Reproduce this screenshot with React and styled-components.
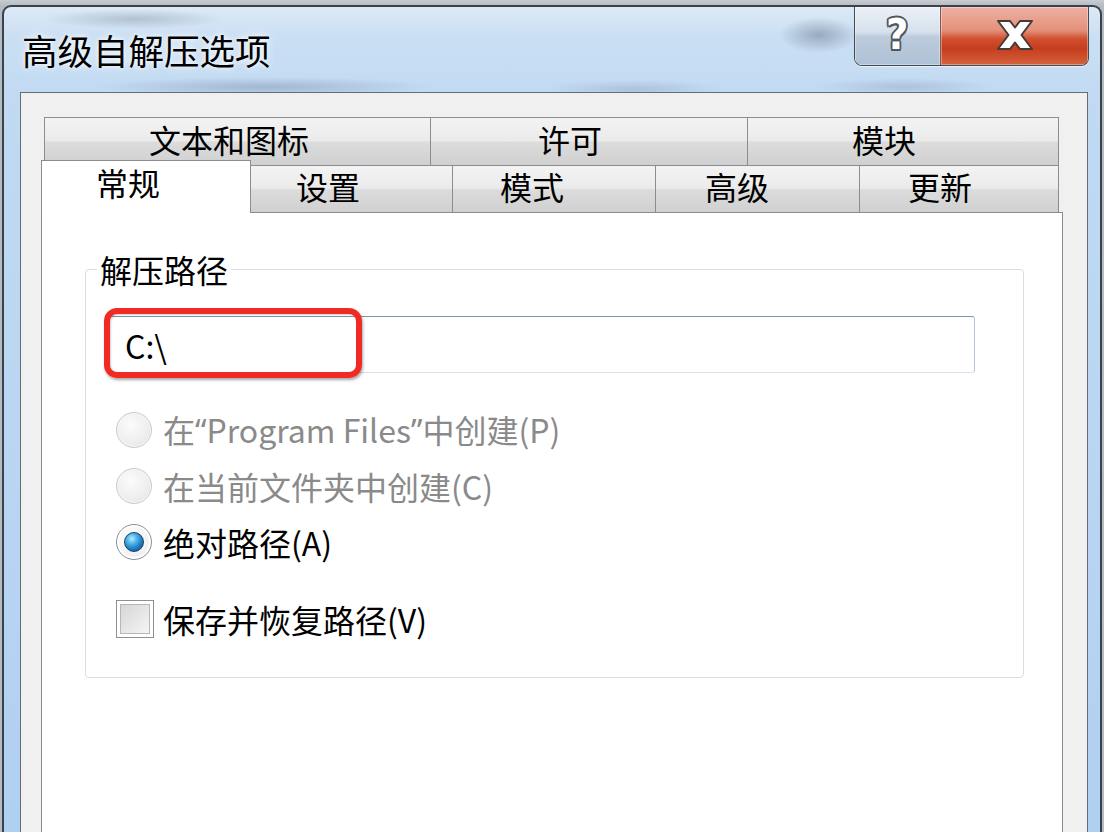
import React from 'react';
import styled, { createGlobalStyle } from 'styled-components';

const GlobalStyle = createGlobalStyle`
  html, body { margin: 0; padding: 0; height: 100%; overflow: hidden; }
  body {
    background: #b5bcc4;
    font-family: "Noto Sans CJK SC", "Noto Sans", sans-serif;
  }
  #root { height: 100%; }
`;

const Page = styled.div`
  box-sizing: border-box;
  height: 832px;
  padding: 5px 2px 0 2px;
  background: linear-gradient(180deg, #c9ccd0 0px, #b4bbc3 6px);
`;

const Window = styled.div`
  box-sizing: border-box;
  width: 1100px;
  height: 827px;
  display: flex;
  flex-direction: column;
  border: 2px solid #3a424b;
  border-bottom: none;
  border-radius: 9px 9px 0 0;
  padding: 0 12px 0 16px;
  overflow: hidden;
  background:
    radial-gradient(ellipse 90px 10px at 130px 12px, rgba(150, 165, 180, 0.55), transparent),
    radial-gradient(ellipse 170px 10px at 260px 80px, rgba(120, 140, 165, 0.45), transparent),
    radial-gradient(ellipse 40px 18px at 815px 28px, rgba(110, 125, 145, 0.55), transparent),
    radial-gradient(ellipse 90px 9px at 630px 82px, rgba(130, 150, 175, 0.35), transparent),
    radial-gradient(ellipse 90px 9px at 900px 80px, rgba(130, 150, 175, 0.35), transparent),
    linear-gradient(180deg, #dde9f5 0px, #cadff3 30px, #c1daf2 90px, #bad6f2 400px, #b0d0f2 100%);
`;

const TitleBar = styled.div`
  flex: 0 0 85px;
  display: flex;
  justify-content: space-between;
  align-items: flex-start;
`;

const Title = styled.div`
  margin-top: 23px;
  padding-left: 2px;
  font-size: 35.5px;
  line-height: 40px;
  color: #000;
  text-shadow: 0 0 10px rgba(255, 255, 255, 0.9), 0 0 4px rgba(255, 255, 255, 0.8);
`;

const CaptionGroup = styled.div`
  display: flex;
  height: 58px;
  margin-right: -1px;
  border: 1.5px solid #414a55;
  border-top: none;
  border-radius: 0 0 8px 8px;
  overflow: hidden;
  box-shadow: 0 1px 0 rgba(255, 255, 255, 0.6);
`;

const CaptionButton = styled.div`
  width: ${(p) => p.$w}px;
  display: flex;
  align-items: center;
  justify-content: center;
  background: ${(p) =>
    p.$close
      ? 'linear-gradient(180deg, #eeb0a2 0%, #e4917b 40%, #cf4f2f 55%, #c63e1e 72%, #d6623e 100%)'
      : 'linear-gradient(180deg, #eaf0f6 0%, #d8e2ed 42%, #bccbdc 52%, #aec1d6 100%)'};
  box-shadow: inset 0 0 0 1px rgba(255, 255, 255, 0.35);
  & + & {
    border-left: 1px solid #7a5a55;
  }
`;

const HelpGlyph = styled.span`
  font-family: "DejaVu Sans", sans-serif;
  font-weight: bold;
  font-size: 42px;
  line-height: 1;
  color: #fff;
  margin-top: -3px;
  transform: scaleX(0.92);
  text-shadow:
    2px 0 0 #50565d, -2px 0 0 #50565d, 0 2px 0 #50565d, 0 -2px 0 #50565d,
    1.5px 1.5px 0 #50565d, -1.5px -1.5px 0 #50565d, 1.5px -1.5px 0 #50565d, -1.5px 1.5px 0 #50565d;
`;

const Client = styled.div`
  flex: 1;
  min-height: 0;
  display: flex;
  flex-direction: column;
  border: 1px solid #646d77;
  border-bottom: none;
  background: #f0f0f0;
  padding: 24px 24px 0 20px;
`;

const TabRow = styled.div`
  display: flex;
  height: ${(p) => p.$h}px;
  padding: 0 4px 0 3px;
  position: relative;
  z-index: ${(p) => (p.$front ? 2 : 1)};
`;

const Tab = styled.div`
  box-sizing: border-box;
  flex: 0 0 ${(p) => p.$w}px;
  display: flex;
  align-items: center;
  padding-left: ${(p) => p.$indent}px;
  padding-bottom: 6px;
  border: 1px solid #8a8d93;
  border-bottom: none;
  font-size: 32px;
  line-height: 1;
  color: #000;
  white-space: nowrap;
  background: linear-gradient(180deg, #f3f3f3 0%, #ebebeb 48%, #dcdcdc 52%, #d0d0d0 100%);
  & + & {
    margin-left: -1px;
  }
  ${(p) =>
    p.$active &&
    `
    background: #ffffff;
    margin-top: -5px;
    margin-bottom: -1px;
    margin-left: -3px;
    margin-right: -2px;
    flex-basis: ${p.$w + 5}px;
    padding-bottom: 10px;
    position: relative;
    z-index: 3;
  `}
`;

const Pane = styled.div`
  flex: 1;
  position: relative;
  z-index: 1;
  background: #fff;
  border: 1px solid #898c95;
  border-bottom: none;
  padding: 38px 38px 0 43px;
`;

const Group = styled.fieldset`
  margin: 0;
  padding: 0;
  min-width: 0;
  border: 1px solid #d5dfe5;
  border-radius: 4px;
`;

const GroupLabel = styled.legend`
  margin-left: 11px;
  padding: 0 3px;
  font-size: 32px;
  line-height: 36px;
  color: #000;
`;

const GroupBody = styled.div`
  padding: 29px 46px 30px 21px;
`;

const InputWrap = styled.div`
  position: relative;
  width: 868px;
`;

const TextBox = styled.div`
  box-sizing: border-box;
  height: 57px;
  display: flex;
  align-items: center;
  padding-left: 17px;
  border: 1px solid #b7c7d8;
  border-top-color: #7f96ae;
  border-bottom-color: #d7e1eb;
  border-radius: 3px;
  background: #fff;
  font-size: 32px;
  color: #000;
`;

const Highlight = styled.div`
  position: absolute;
  left: -3px;
  top: -8px;
  width: 258px;
  height: 70px;
  box-sizing: border-box;
  border: 6px solid #ef2b24;
  border-radius: 13px;
  box-shadow: 1px 2px 3px rgba(0, 0, 0, 0.35), inset 1px 1px 2px rgba(0, 0, 0, 0.2);
  pointer-events: none;
`;

const Options = styled.div`
  margin-top: 29px;
  padding-left: 9px;
  display: flex;
  flex-direction: column;
`;

const OptionRow = styled.div`
  height: 56px;
  display: flex;
  align-items: center;
  gap: ${(p) => (p.$check ? 9 : 11)}px;
  margin-top: ${(p) => (p.$check ? 21 : 0)}px;
  font-size: 32px;
  line-height: 1;
  color: ${(p) => (p.$disabled ? '#8a8a8a' : '#000')};
  white-space: nowrap;
`;

const Quote = styled.span`
  font-family: "Noto Sans", sans-serif;
`;

const Radio = styled.span`
  box-sizing: border-box;
  flex: 0 0 36px;
  height: 36px;
  border-radius: 50%;
  display: flex;
  align-items: center;
  justify-content: center;
  border: 1.5px solid ${(p) => (p.$disabled ? '#cacaca' : '#8d9094')};
  background: ${(p) =>
    p.$disabled
      ? 'radial-gradient(circle at 40% 35%, #fbfbfb 0%, #efefef 55%, #e0e0e0 100%)'
      : 'radial-gradient(circle at 40% 35%, #ffffff 0%, #f2f2f2 60%, #dadada 100%)'};
  box-shadow: ${(p) => (p.$disabled ? 'inset 0 0 0 1px #f6f6f6' : 'inset 0 0 0 2px #fff')};
`;

const RadioDot = styled.span`
  width: 20px;
  height: 20px;
  border-radius: 50%;
  box-sizing: border-box;
  border: 1.5px solid #173f66;
  background: radial-gradient(circle at 38% 32%, #b9ecff 0%, #53b8ec 28%, #1f78c0 62%, #0c4a86 100%);
`;

const Check = styled.span`
  box-sizing: border-box;
  flex: 0 0 38px;
  height: 38px;
  border: 1.5px solid #8e8f8f;
  padding: 3px;
  background: #fff;
  display: flex;
`;

const CheckInner = styled.span`
  flex: 1;
  border: 1px solid #b4b8bd;
  background: linear-gradient(135deg, #d6d6d6 0%, #e4e4e4 45%, #f5f5f5 100%);
`;

function CloseIcon() {
  return (
    <svg width="38" height="32" viewBox="0 0 38 32" style={{ marginTop: '-2px' }}>
      <polygon
        points="2,2 14,2 19,8.5 24,2 36,2 25.5,16 36,30 24,30 19,23.5 14,30 2,30 12.5,16"
        fill="#ffffff"
        stroke="#463a3a"
        strokeWidth="2"
        strokeLinejoin="round"
      />
    </svg>
  );
}

const topTabs = [
  { label: '文本和图标', w: 387, indent: 104 },
  { label: '许可', w: 318, indent: 107 },
  { label: '模块', w: 312, indent: 104 },
];

const bottomTabs = [
  { label: '常规', w: 205, indent: 54, active: true },
  { label: '设置', w: 205, indent: 47 },
  { label: '模式', w: 204, indent: 47 },
  { label: '高级', w: 205, indent: 49 },
  { label: '更新', w: 200, indent: 48 },
];

const radios = [
  {
    key: 'p',
    label: (
      <>
        在<Quote>“</Quote>Program Files<Quote>”</Quote>中创建(P)
      </>
    ),
    disabled: true,
  },
  { key: 'c', label: '在当前文件夹中创建(C)', disabled: true },
  { key: 'a', label: '绝对路径(A)', checked: true },
];

export default function App() {
  return (
    <>
      <GlobalStyle />
      <Page>
        <Window>
          <TitleBar>
            <Title>高级自解压选项</Title>
            <CaptionGroup>
              <CaptionButton $w={85}>
                <HelpGlyph>?</HelpGlyph>
              </CaptionButton>
              <CaptionButton $w={147} $close>
                <CloseIcon />
              </CaptionButton>
            </CaptionGroup>
          </TitleBar>
          <Client>
            <TabRow $h={48}>
              {topTabs.map((t) => (
                <Tab key={t.label} $w={t.w} $indent={t.indent}>
                  {t.label}
                </Tab>
              ))}
            </TabRow>
            <TabRow $h={47} $front>
              {bottomTabs.map((t) => (
                <Tab key={t.label} $w={t.w} $indent={t.indent} $active={t.active}>
                  {t.label}
                </Tab>
              ))}
            </TabRow>
            <Pane>
              <Group>
                <GroupLabel>解压路径</GroupLabel>
                <GroupBody>
                  <InputWrap>
                    <TextBox>C:\</TextBox>
                    <Highlight />
                  </InputWrap>
                  <Options>
                    {radios.map((r) => (
                      <OptionRow key={r.key} $disabled={r.disabled}>
                        <Radio $disabled={r.disabled}>{r.checked && <RadioDot />}</Radio>
                        <span>{r.label}</span>
                      </OptionRow>
                    ))}
                    <OptionRow $check>
                      <Check>
                        <CheckInner />
                      </Check>
                      <span>保存并恢复路径(V)</span>
                    </OptionRow>
                  </Options>
                </GroupBody>
              </Group>
            </Pane>
          </Client>
        </Window>
      </Page>
    </>
  );
}
